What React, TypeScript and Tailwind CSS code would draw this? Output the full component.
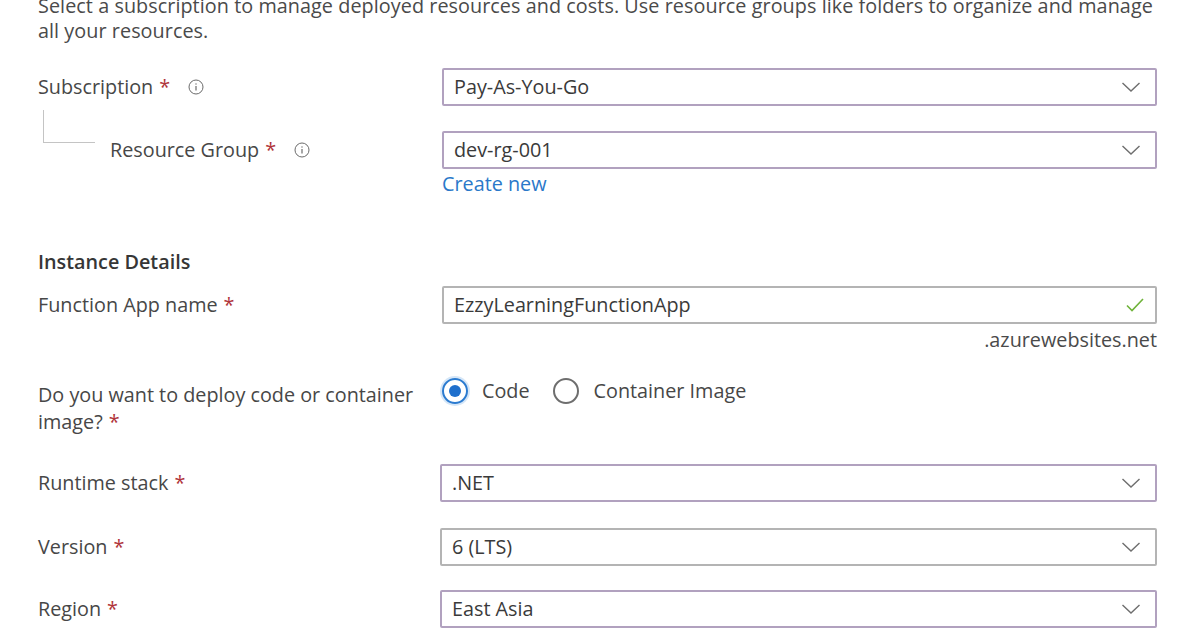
import React from 'react';

const font = { fontFamily: '"Open Sans", "Noto Sans", sans-serif' };

const Req = () => <span className="text-[#b0343a] ml-[6px]">*</span>;

const InfoIcon = () => (
  <svg className="w-[16px] h-[16px] ml-[18px] shrink-0" viewBox="0 0 16 16" fill="none" stroke="#6b6b6b">
    <circle cx="8" cy="8" r="7" strokeWidth="1" />
    <line x1="8" y1="7" x2="8" y2="11.5" strokeWidth="1.2" />
    <circle cx="8" cy="5" r="0.7" fill="#6b6b6b" stroke="none" />
  </svg>
);

const Chevron = () => (
  <svg className="w-[20px] h-[12px]" viewBox="0 0 20 12" fill="none" stroke="#6e6e6e" strokeWidth="1.4">
    <polyline points="1.5,2 10,10 18.5,2" />
  </svg>
);

const Check = () => (
  <svg className="w-[20px] h-[16px]" viewBox="0 0 20 16" fill="none" stroke="#6fb33a" strokeWidth="1.6">
    <polyline points="2,8.5 7,13.5 18,2" />
  </svg>
);

interface SelectProps {
  value: string;
  tinted?: boolean;
}

const Select: React.FC<SelectProps> = ({ value, tinted = true }) => (
  <div
    className={`h-[38px] flex items-center justify-between pl-[10px] pr-[14px] rounded-[2px] border-2 bg-white ${
      tinted ? 'border-[#b1a1bf]' : 'border-[#b4b4b4]'
    }`}
  >
    <span className="text-[#3a3a3a]">{value}</span>
    <Chevron />
  </div>
);

const Radio = ({ checked }: { checked: boolean }) =>
  checked ? (
    <span className="w-[26px] h-[26px] rounded-full border-2 border-[#2b7bd0] ring-2 ring-[#d5e6f7] flex items-center justify-center">
      <span className="w-[12px] h-[12px] rounded-full bg-[#1f6fcc]" />
    </span>
  ) : (
    <span className="w-[26px] h-[26px] rounded-full border-2 border-[#6e6e6e]" />
  );

export default function App() {
  return (
    <div className="w-[1196px] h-[628px] overflow-hidden bg-white text-[19.8px] text-[#474747]" style={font}>
      <div className="pl-[38px] pr-[39px]">
        <p className="mt-[-7px] leading-[25px] max-w-[1125px] text-[#4a4a4a] tracking-[0.06px]">
          Select a subscription to manage deployed resources and costs. Use resource groups like folders to organize and manage all your resources.
        </p>

        <div className="grid grid-cols-[404px_715px]">
          {/* Subscription */}
          <div className="mt-[25px] flex items-center h-[38px]">
            <span>Subscription</span>
            <Req />
            <InfoIcon />
          </div>
          <div className="mt-[25px]">
            <Select value="Pay-As-You-Go" />
          </div>

          {/* Resource group, hung off the subscription */}
          <div className="mt-[25px] flex items-start h-[38px]">
            <div className="w-[52px] h-[33px] mt-[-21px] ml-[5px] border-l border-b border-[#c4c4c4] shrink-0" />
            <div className="self-center flex items-center ml-[15px]">
              <span>Resource Group</span>
              <Req />
              <InfoIcon />
            </div>
          </div>
          <div className="mt-[25px]">
            <Select value="dev-rg-001" />
            <div className="mt-[4px] leading-[22px] text-[#2a78c9]">Create new</div>
          </div>

          {/* Instance details */}
          <div className="col-span-2 mt-[55px] leading-[24px] font-semibold text-[#363636]">Instance Details</div>

          <div className="mt-[12px] flex items-center h-[38px]">
            <span>Function App name</span>
            <Req />
          </div>
          <div className="mt-[12px]">
            <div className="h-[38px] flex items-center justify-between pl-[10px] pr-[10px] rounded-[2px] border-2 border-[#b4b4b4] bg-white">
              <span className="text-[#3a3a3a]">EzzyLearningFunctionApp</span>
              <Check />
            </div>
            <div className="text-right leading-[22px] mt-[5px] text-[#4a4a4a]">.azurewebsites.net</div>
          </div>

          <div className="mt-[30px] leading-[27px] pr-[8px]">
            Do you want to deploy code or container image?
            <Req />
          </div>
          <div className="mt-[24px] flex items-start h-[30px]">
            <div className="flex items-center gap-[14px] mt-[1px]">
              <Radio checked />
              <span>Code</span>
            </div>
            <div className="flex items-center gap-[15px] ml-[23px] mt-[1px]">
              <Radio checked={false} />
              <span>Container Image</span>
            </div>
          </div>

          <div className="mt-[29px] flex items-center h-[38px]">
            <span>Runtime stack</span>
            <Req />
          </div>
          <div className="mt-[29px] ml-[-2px]">
            <Select value=".NET" />
          </div>

          <div className="mt-[26px] flex items-center h-[38px]">
            <span>Version</span>
            <Req />
          </div>
          <div className="mt-[26px] ml-[-2px]">
            <Select value="6 (LTS)" tinted={false} />
          </div>

          <div className="mt-[24px] flex items-center h-[38px]">
            <span>Region</span>
            <Req />
          </div>
          <div className="mt-[24px] ml-[-2px]">
            <Select value="East Asia" />
          </div>
        </div>
      </div>
    </div>
  );
}
